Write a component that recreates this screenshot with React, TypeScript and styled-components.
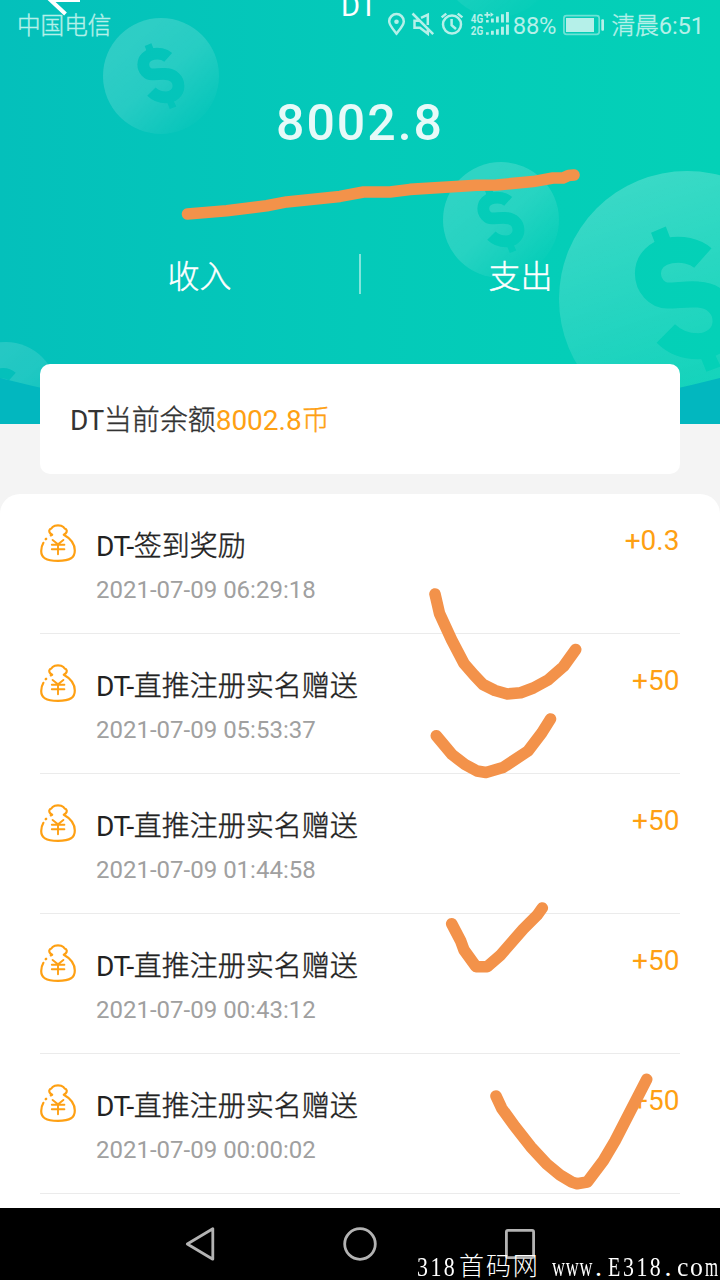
import React from "react";
import styled, { createGlobalStyle } from "styled-components";

const GlobalStyle = createGlobalStyle`
  * { box-sizing: border-box; }
  html, body { margin: 0; padding: 0; }
  body {
    background: #f5f5f5;
    font-family: Roboto, "Noto Sans CJK SC", sans-serif;
    overflow: hidden;
  }
`;

const ACCENT = "#fea013";

const Screen = styled.div`
  position: relative;
  width: 720px;
  height: 1280px;
  overflow: hidden;
  display: flex;
  flex-direction: column;
  background: #f4f4f4;
`;

const Han = styled.span`
  font-weight: 300;
  -webkit-text-stroke: 0.4px currentColor;
`;

const StatusBar = styled.div`
  position: absolute;
  top: 0;
  left: 0;
  width: 720px;
  height: 50px;
  padding: 0 16px 0 17px;
  display: flex;
  align-items: center;
  color: #b5f0e9;
  z-index: 2;
`;

const Carrier = styled.span`
  flex: 1;
  font-size: 23.6px;
  line-height: 50px;
  padding-top: 1px;
`;

const StatusIcons = styled.svg<{ $left?: number; $right?: number }>`
  display: block;
  flex: none;
  margin-left: ${(p) => p.$left ?? 0}px;
  margin-right: ${(p) => p.$right ?? 0}px;
`;

const StatusText = styled.span`
  font-size: 23.8px;
  line-height: 50px;
  padding-top: 1px;
  letter-spacing: -0.15px;
`;

const Header = styled.header`
  position: relative;
  flex: none;
  height: 424px;
  overflow: hidden;
  color: #fff;
  display: flex;
  flex-direction: column;
`;

const HeaderArt = styled.svg`
  position: absolute;
  inset: 0;
`;

const TitleBar = styled.div`
  position: relative;
  height: 50px;
  display: flex;
  justify-content: center;
`;

const BackArrow = styled.svg`
  position: absolute;
  left: 46px;
  top: -20px;
`;

const Title = styled.h1`
  margin: -12px 0 0;
  padding-right: 2px;
  font-size: 29px;
  font-weight: 400;
  line-height: 36px;
`;

const Total = styled.div`
  position: relative;
  height: 144px;
  font-size: 50px;
  line-height: 146px;
  font-weight: 500;
  letter-spacing: 2px;
  text-align: center;
  color: rgba(255, 255, 255, 0.9);
`;

const Tabs = styled.nav`
  position: relative;
  margin-top: 60px;
  padding: 0 40px;
  height: 40px;
  display: flex;
  align-items: center;
`;

const Tab = styled.span`
  flex: 1;
  text-align: center;
  font-size: 32px;
  line-height: 40px;
  padding-top: 6px;
`;

const TabDivider = styled.i`
  width: 2px;
  height: 40px;
  background: rgba(255, 255, 255, 0.5);
`;

const BalanceCard = styled.section`
  position: relative;
  flex: none;
  height: 110px;
  margin: -60px 40px 20px;
  padding: 1px 30px 0;
  border-radius: 10px;
  background: #fff;
  font-size: 28px;
  line-height: 112px;
  color: #333;
`;

const Highlight = styled.span`
  color: ${ACCENT};
`;

const Tight = styled.span`
  letter-spacing: -0.55px;
`;

const Records = styled.ul`
  flex: 1;
  margin: 0;
  padding: 0 40px;
  list-style: none;
  background: #fff;
  border-radius: 20px 20px 0 0;
  overflow: hidden;
`;

const Record = styled.li`
  height: 140px;
  padding-top: 30px;
  border-bottom: 1px solid #ebebeb;
  display: flex;
  align-items: flex-start;
`;

const RecordBody = styled.div`
  flex: 1;
  margin-left: 20px;
`;

const RecordName = styled.div`
  font-size: 28px;
  line-height: 46px;
  height: 44px;
  color: #222;
`;

const RecordTime = styled.div`
  font-size: 24px;
  line-height: 44px;
  color: #a0a0a0;
`;

const Amount = styled.div`
  padding-right: 0.6px;
  font-size: 28px;
  line-height: 34px;
  color: ${ACCENT};
`;

const SystemNav = styled.footer`
  position: relative;
  flex: none;
  height: 72px;
  padding: 0 120px;
  background: #000;
  display: flex;
  align-items: center;
`;

const NavButton = styled.div`
  flex: 1;
  display: flex;
  justify-content: center;
`;

const Watermark = styled.div`
  position: absolute;
  left: 417px;
  top: 41px;
  height: 31px;
  width: 303px;
  display: flex;
  color: #fff;
  font-family: "Liberation Serif", "Noto Sans CJK SC", serif;
  font-size: 28px;
  line-height: 36px;
  white-space: pre;
`;

const Segment = styled.span<{ $w: number; $scale: number; $spacing: number; $cjk?: boolean }>`
  flex: none;
  width: ${(p) => p.$w}px;
  transform: scaleX(${(p) => p.$scale});
  transform-origin: left;
  letter-spacing: ${(p) => p.$spacing}px;
  ${(p) => p.$cjk && "font-size: 25px; font-weight: 300; line-height: 36px;"}
`;

const Doodles = styled.svg`
  position: absolute;
  left: 0;
  top: 0;
  z-index: 3;
  pointer-events: none;
`;

const Coin = ({ x, y, r, fill = "url(#coin)" }: { x: number; y: number; r: number; fill?: string }) => (
  <g transform={`translate(${x} ${y}) scale(${r / 58})`}>
    <circle r="58" fill={fill} mask="url(#dollar)" />
  </g>
);

const MoneyBag = () => (
  <svg width="36" height="38" viewBox="0 0 36 38" fill="none" stroke={ACCENT} strokeWidth="2.2" strokeLinecap="round" strokeLinejoin="round">
    <path d="M10.8 11.4 L12.2 10.7 C9.6 9.4 8.4 7.2 9.8 5.4 C11 5 11.8 4.4 12.6 3 C15 .8 21 .8 23.4 3 C24.2 4.4 25 5 26.2 5.4 C27.6 7.2 26.4 9.4 23.8 10.7 C29.8 14 34.8 19.5 34.8 26.5 C34.8 33.5 30.5 36.8 18 36.8 C5.5 36.8 1.2 33.5 1.2 27 C1.2 23.8 2 21.2 3.4 18.8" />
    <path d="M5.8 15.1 L6.1 14.8" strokeWidth="2.5" />
    <path d="M12.6 15.9 L18 20.3 L23.4 15.9 M18 20.5 V30.3 M11.8 20.7 H24.4 M11.8 25.3 H24.4" strokeWidth="1.9" />
  </svg>
);

const records = [
  { name: "签到奖励", time: "2021-07-09 06:29:18", amount: "+0.3" },
  { name: "直推注册实名赠送", time: "2021-07-09 05:53:37", amount: "+50" },
  { name: "直推注册实名赠送", time: "2021-07-09 01:44:58", amount: "+50" },
  { name: "直推注册实名赠送", time: "2021-07-09 00:43:12", amount: "+50" },
  { name: "直推注册实名赠送", time: "2021-07-09 00:00:02", amount: "+50" },
];

export default function App() {
  return (
    <Screen>
      <GlobalStyle />
      <StatusBar>
        <Carrier><Han>中国电信</Han></Carrier>
        <StatusIcons $right={3} width="122" height="50" viewBox="388 0 122 50" fill="none" stroke="currentColor" strokeWidth="2.5">
          <path d="M396.5 33.6 C393 29.2 389.2 25 389.2 21.4 A7.3 7.3 0 0 1 403.8 21.4 C403.8 25 400 29.2 396.5 33.6 Z" />
          <circle cx="396.5" cy="21.8" r="2.3" fill="currentColor" stroke="none" />
          <path d="M412.5 13.5 L433.2 34.2 M421 17.8 L427.8 14.6 V25 M427.8 29.5 V33.8 L420 27.8 H414.5 V20.7 H419" />
          <circle cx="452" cy="24.6" r="9" />
          <path d="M451.6 19 V25.2 L456 29 M441.6 17.4 L446.3 13.6 M462.4 17.4 L457.7 13.6" />
          <g fill="currentColor" stroke="none">
            <text x="470.8" y="22.9" fontSize="13.5" fontWeight="700" fontFamily="Roboto" textLength="12.4" lengthAdjust="spacingAndGlyphs">4G</text>
            <text x="470.8" y="34.9" fontSize="13.5" fontWeight="700" fontFamily="Roboto" textLength="12.4" lengthAdjust="spacingAndGlyphs">2G</text>
            <path d="M486.4 12 h1.7 v2 h2 v1.7 h-2 v2 h-1.7 v-2 h-2 v-1.7 h2z M490.5 12.2 l3.2 2.4 l-3.2 2.4z" />
            <path d="M486 20h2.7v2.6H486z M491 18.6h2.8v4H491z M496 16.6h2.8v6H496z M501 14.2h2.9v8.4H501z M506 12h2.9v10.6H506z" />
            <path d="M486 32.2h2.7v2.6H486z M491 30.8h2.8v4H491z M496 29.2h2.8v5.6H496z M501 26.8h2.9v8H501z M506 24.4h2.9v10.4H506z" />
          </g>
        </StatusIcons>
        <StatusText>88%</StatusText>
        <StatusIcons $left={7} $right={6} width="42" height="50" viewBox="563 0 42 50" fill="none" stroke="currentColor">
          <rect x="563.9" y="15.7" width="35.3" height="18.6" rx="2.6" strokeWidth="1.7" opacity=".6" />
          <rect x="566" y="18" width="28" height="14" fill="currentColor" stroke="none" />
          <rect x="601.3" y="19.3" width="2.7" height="11.4" rx="1" fill="currentColor" stroke="none" />
        </StatusIcons>
        <StatusText><Han>清晨</Han>6:51</StatusText>
      </StatusBar>

      <Header>
        <HeaderArt width="720" height="424" viewBox="0 0 720 424">
          <defs>
            <linearGradient id="sky" x1="0" y1="0" x2="1" y2="0">
              <stop offset="0" stopColor="#04c0bb" />
              <stop offset=".5" stopColor="#04cab9" />
              <stop offset="1" stopColor="#04d1b7" />
            </linearGradient>
            <linearGradient id="coin" x1=".25" y1=".2" x2=".82" y2=".88">
              <stop offset="0" stopColor="#fff" stopOpacity=".17" />
              <stop offset=".45" stopColor="#fff" stopOpacity=".14" />
              <stop offset="1" stopColor="#fff" stopOpacity=".02" />
            </linearGradient>
            <linearGradient id="bigCoin" x1=".3" y1="0" x2=".62" y2="1">
              <stop offset="0" stopColor="#fff" stopOpacity=".22" />
              <stop offset="1" stopColor="#fff" stopOpacity=".04" />
            </linearGradient>
            <mask id="dollar" maskUnits="userSpaceOnUse" x="-60" y="-60" width="120" height="120">
              <rect x="-60" y="-60" width="120" height="120" fill="#fff" />
              <path
                d="M7.2 -18.6 C0 -25 -17.7 -23.5 -17.7 -11.5 C-17.7 -6 -13.5 -1.6 -9 -1.6 C-4 -1.6 0 -2.4 5 -2 C12 -1.6 17.5 3 17.5 10 C17.5 17 11.5 21.4 5 21.4 C-1 21.4 -6 19.2 -9.6 15.6"
                fill="none"
                stroke="#000"
                strokeWidth="11.8"
              />
              <path d="M-16.3 -30 L-9.6 -32.8 L-7 -26 L-13.6 -23 Z M5.6 25 L11.5 22.6 L15.3 30.6 L8.8 33 Z" fill="#000" />
            </mask>
          </defs>
          <rect width="720" height="424" fill="url(#sky)" />
          <Coin x={161} y={76} r={58} />
          <Coin x={501} y={220} r={58} />
          <g opacity=".6">
            <Coin x={498} y={-41} r={58} />
          </g>
          <g opacity=".8">
            <Coin x={6} y={393} r={51} />
          </g>
          <Coin x={687} y={299} r={128} fill="url(#bigCoin)" />
          <path d="M0 378 Q180 424 360 424 Q540 424 720 378 V424 H0 Z" fill="#02b7bf" />
        </HeaderArt>
        <TitleBar>
          <BackArrow width="36" height="40" viewBox="0 0 36 40" fill="none" stroke="#fff" strokeWidth="4">
            <path d="M34 20 H5 M19.5 34 L4.5 20 L19.5 6" />
          </BackArrow>
          <Title>DT</Title>
        </TitleBar>
        <Total>8002.8</Total>
        <Tabs>
          <Tab><Han>收入</Han></Tab>
          <TabDivider />
          <Tab><Han>支出</Han></Tab>
        </Tabs>
      </Header>

      <BalanceCard>
        <Tight>DT</Tight><Han>当前余额</Han><Highlight>8002.8<Han>币</Han></Highlight>
      </BalanceCard>

      <Records>
        {records.map((r) => (
          <Record key={r.time}>
            <MoneyBag />
            <RecordBody>
              <RecordName><Tight>DT-</Tight><Han>{r.name}</Han></RecordName>
              <RecordTime>{r.time}</RecordTime>
            </RecordBody>
            <Amount>{r.amount}</Amount>
          </Record>
        ))}
      </Records>

      <SystemNav>
        <NavButton>
          <svg width="36" height="36" viewBox="182 1226 36 36" fill="none" stroke="#b3b3b3" strokeWidth="2.8" strokeLinejoin="round">
            <path d="M187.3 1244 L212.8 1228.8 V1259.2 Z" />
          </svg>
        </NavButton>
        <NavButton>
          <svg width="36" height="36" viewBox="0 0 36 36" fill="none" stroke="#b3b3b3" strokeWidth="2.8">
            <circle cx="18" cy="18" r="15.3" />
          </svg>
        </NavButton>
        <NavButton>
          <svg width="36" height="36" viewBox="0 0 36 36" fill="none" stroke="#b3b3b3" strokeWidth="2.8">
            <rect x="4.4" y="4.4" width="27.2" height="27.2" rx="1.5" />
          </svg>
        </NavButton>
        <Watermark>
          <Segment $w={42} $scale={0.78} $spacing={3.2}>318</Segment>
          <Segment $w={93} $scale={1} $spacing={1.9} $cjk>首码网</Segment>
          <Segment $w={43} $scale={0.64} $spacing={1.2}>www</Segment>
          <Segment $w={13} $scale={1} $spacing={0}>.</Segment>
          <Segment $w={14.5} $scale={0.72} $spacing={0}>E</Segment>
          <Segment $w={42} $scale={0.78} $spacing={3.2}>318</Segment>
          <Segment $w={12.5} $scale={1} $spacing={0}>.</Segment>
          <Segment $w={28} $scale={0.92} $spacing={1.8}>co</Segment>
          <Segment $w={13} $scale={0.6} $spacing={0}>m</Segment>
        </Watermark>
      </SystemNav>

      <Doodles width="720" height="1280" viewBox="0 0 720 1280" fill="none" stroke="#f3924a" strokeWidth="11.6" strokeLinecap="round" strokeLinejoin="round">
        <polyline points="187.5,214 226.7,210.7 266.7,205.7 286.7,201.9 340,196.4 363.5,192 390,192 410,189.4 476.7,185.3 496.7,185 533,181.6 553,178 563,178 568.5,175.5 574,175" />
        <polyline points="435,594 439.5,613.5 451.7,640 464,663.5 474,675 483,684.5 495,690.5 507.3,694 520.7,692.7 533.3,688 548,680 563.5,666.5 575.7,649.5" />
        <polyline points="436.3,735.7 452,754.5 465,764.5 477,771 486,772.5 503,767.5 528,751 541.7,733 550.5,719" />
        <polyline points="451.7,923.7 460.7,941 464,950 476,966.7 487.3,966.7 500,955.7 523.3,929 537.3,915 542.3,908" />
        <polyline points="496,1096 501.7,1108.3 515,1126.7 530.7,1146.7 546.7,1164 560,1175 571.7,1182 577,1183.7 587.3,1182 603.3,1160.7 615,1141 646.7,1079.3" />
      </Doodles>
    </Screen>
  );
}
